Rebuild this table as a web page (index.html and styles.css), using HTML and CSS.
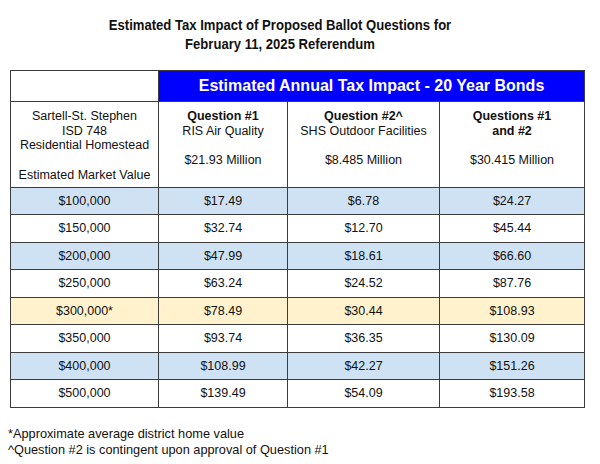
FILE: index.html
```html
<!DOCTYPE html>
<html>
<head>
<meta charset="utf-8">
<link rel="stylesheet" href="styles.css">
</head>
<body>
<div class="page">
  <h1 class="title">Estimated Tax Impact of Proposed Ballot Questions for<br>February 11, 2025 Referendum</h1>
  <table class="tax">
    <colgroup>
      <col class="c1"><col class="c2"><col class="c3"><col class="c4">
    </colgroup>
    <thead>
      <tr class="band">
        <th class="blank"></th>
        <th class="banner" colspan="3">Estimated Annual Tax Impact - 20 Year Bonds</th>
      </tr>
      <tr class="heads">
        <th class="lead">Sartell-St. Stephen<br>ISD 748<br>Residential Homestead<br><br>Estimated Market Value</th>
        <th><b>Question #1</b><br>RIS Air Quality<br><br>$21.93 Million</th>
        <th><b>Question #2^</b><br>SHS Outdoor Facilities<br><br>$8.485 Million</th>
        <th><b>Questions #1<br>and #2</b><br><br>$30.415 Million</th>
      </tr>
    </thead>
    <tbody>
      <tr class="blue"><td>$100,000</td><td>$17.49</td><td>$6.78</td><td>$24.27</td></tr>
      <tr><td>$150,000</td><td>$32.74</td><td>$12.70</td><td>$45.44</td></tr>
      <tr class="blue"><td>$200,000</td><td>$47.99</td><td>$18.61</td><td>$66.60</td></tr>
      <tr><td>$250,000</td><td>$63.24</td><td>$24.52</td><td>$87.76</td></tr>
      <tr class="yellow"><td>$300,000*</td><td>$78.49</td><td>$30.44</td><td>$108.93</td></tr>
      <tr><td>$350,000</td><td>$93.74</td><td>$36.35</td><td>$130.09</td></tr>
      <tr class="blue"><td>$400,000</td><td>$108.99</td><td>$42.27</td><td>$151.26</td></tr>
      <tr><td>$500,000</td><td>$139.49</td><td>$54.09</td><td>$193.58</td></tr>
    </tbody>
  </table>
  <div class="notes">
    <p>*Approximate average district home value</p>
    <p>^Question #2 is contingent upon approval of Question #1</p>
  </div>
</div>
</body>
</html>
```

FILE: styles.css
```css
html, body {
  margin: 0;
  padding: 0;
  background: #ffffff;
}
body {
  font-family: "Liberation Sans", Arial, sans-serif;
  color: #111111;
}
.page {
  width: 600px;
  height: 464px;
  overflow: hidden;
}
.title {
  margin: 0;
  padding: 15px 0 0 0;
  width: 560px;
  font-size: 15px;
  line-height: 19px;
  font-weight: bold;
  text-align: center;
  color: #111;
  transform: scaleX(0.873);
  transform-origin: 280px 0;
}
.tax {
  margin: 17px 0 0 10px;
  border-collapse: collapse;
  table-layout: fixed;
  width: 574px;
  font-size: 12.5px;
}
.c1 { width: 148px; }
.c2 { width: 129px; }
.c3 { width: 152px; }
.c4 { width: 145px; }
.tax th, .tax td {
  border: 1px solid #3c3c3c;
  padding: 0;
  text-align: center;
}
.band th {
  height: 30px;
}
.banner {
  background: #0000ff;
  color: #ffffff;
  font-size: 16px;
  font-weight: bold;
}
.heads th {
  font-weight: normal;
  vertical-align: top;
  line-height: 14.7px;
  padding: 7px 0 4px;
  height: 73px;
}
.heads b {
  font-weight: bold;
}
.tax td {
  height: 26.5px;
}
.blue td {
  background: #cfe2f3;
}
.yellow td {
  background: #fff2cc;
}
.notes {
  margin-top: 18px;
  padding-left: 8px;
  font-size: 12.75px;
  line-height: 16px;
}
.notes p {
  margin: 0;
}
```
